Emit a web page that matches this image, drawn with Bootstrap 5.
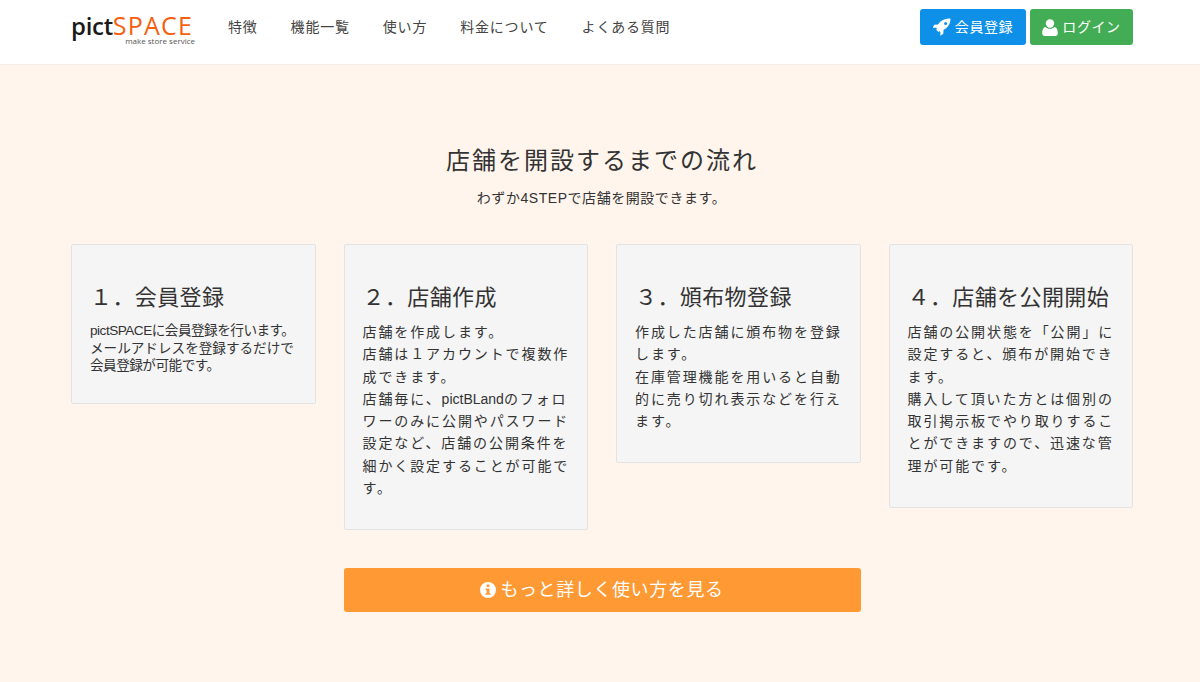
<!DOCTYPE html>
<html lang="ja">

<head>
    <meta charset="UTF-8">
    <meta name="viewport" content="width=device-width, initial-scale=1.0">
    <title>pictSPACE</title>
    <link href="https://cdn.jsdelivr.net/npm/bootstrap@5.3.3/dist/css/bootstrap.min.css" rel="stylesheet">
    <style>
        body {
            font-family: "Liberation Sans", "Noto Sans CJK JP", sans-serif;
            background: #fff5ec;
            color: #333;
            min-height: 682px;
        }

        .top-bar {
            background: #fff;
            height: 65px;
            border-bottom: 1px solid #f3eee9;
            padding: 0 67px 10px 71px;
        }

        .brand-logo {
            width: 125px;
            height: 40px;
            margin-top: 10px;
            text-decoration: none;
            line-height: 1;
        }

        .brand-main {
            font-family: "Open Sans", sans-serif;
            font-size: 24px;
            letter-spacing: -.3px;
            color: #1a1a1a;
            font-weight: 600;
            line-height: 26px;
        }

        .brand-main span {
            color: #f5600f;
            font-size: 25px;
            font-weight: 500;
            letter-spacing: 1.2px;
        }

        .brand-sub {
            font-family: "Open Sans", sans-serif;
            font-size: 8px;
            color: #555;
            text-align: right;
            line-height: 8px;
            margin-top: -2px;
            margin-right: 1px;
        }

        .top-links {
            margin-left: 32px;
            gap: 33px;
        }

        .top-links a {
            color: #444;
            font-size: 14px;
            letter-spacing: .8px;
            text-decoration: none;
        }

        .head-btn {
            height: 36px;
            font-size: 14px;
            letter-spacing: .6px;
            padding: 0 10px;
            color: #fff;
            border: 0;
            border-radius: 3px;
            white-space: nowrap;
        }

        .btn-join { background: #0e90e9; width: 106px; }
        .btn-login { background: #43ad55; width: 103px; }

        .flow-title {
            font-size: 24px;
            font-weight: 400;
            letter-spacing: 2px;
            text-align: center;
            margin: 79px 67px 0 71px;
            line-height: 34px;
        }

        .flow-lead {
            font-size: 14px;
            letter-spacing: .55px;
            text-align: center;
            margin: 10px 0 0;
            padding-left: 3px;
            line-height: 20px;
        }

        .flow-grid {
            display: grid;
            grid-template-columns: repeat(4, minmax(0, 1fr));
            column-gap: 28px;
            align-items: start;
            margin: 36px 67px 0 71px;
        }

        .flow-box {
            background: #f5f5f5;
            border: 1px solid #e3e3e3;
            border-radius: 2px;
            padding: 39px 17px 0 18px;
        }

        .flow-box h3 {
            font-size: 22px;
            font-weight: 400;
            line-height: 28px;
            margin: 0 0 9px;
            letter-spacing: .4px;
        }

        .flow-box p {
            font-size: 14px;
            line-height: 22.3px;
            letter-spacing: 1.9px;
            margin: 0;
        }

        .flow-box p .word-tight { letter-spacing: 0; }

        .box-one { height: 160px; }
        .box-one p { font-size: 13.6px; line-height: 17.5px; letter-spacing: 0; white-space: nowrap; }
        .box-one p .line-tight { letter-spacing: -.5px; }
        .box-one h3 { margin-bottom: 10px; }
        .box-two { height: 286px; }
        .box-three { height: 219px; }
        .box-four { height: 264px; }

        .more-btn {
            grid-column: 2 / span 2;
            height: 44px;
            margin-top: 38px;
            background: #ff9933;
            color: #fff;
            border: 0;
            border-radius: 3px;
            font-size: 18px;
            letter-spacing: .6px;
        }

        .more-btn:hover { background: #ff9933; color: #fff; }
    </style>
</head>

<body>

    <!-- NAVBAR -->
    <nav class="top-bar d-flex align-items-center justify-content-between">
        <div class="d-flex align-items-center">
            <a class="brand-logo d-block" href="#">
                <div class="brand-main">pict<span>SPACE</span></div>
                <div class="brand-sub">make store service</div>
            </a>
            <div class="top-links d-flex">
                <a href="#">特徴</a>
                <a href="#">機能一覧</a>
                <a href="#">使い方</a>
                <a href="#">料金について</a>
                <a href="#">よくある質問</a>
            </div>
        </div>
        <div class="d-flex gap-1">
            <button type="button" class="btn head-btn btn-join d-flex align-items-center justify-content-center gap-1">
                <svg width="18" height="18" viewBox="0 0 18 18" fill="#fff">
                    <path d="M17.4.6c.3 3.6-1 6.7-4 9.3l-2.9 2.2-.2 3.6-3 2 .1-3.5-1.1-1.1-.9.8-2.200-2.200.8-.9-1.100-1.100-3.500.1 2-3 3.600-.2 2.200-2.900C10.700 1.600 13.800.3 17.400.6z"/>
                    <circle cx="12.600" cy="5.400" r="1.500" fill="#0e90e9"/>
                </svg>
                会員登録
            </button>
            <button type="button" class="btn head-btn btn-login d-flex align-items-center justify-content-center gap-1">
                <svg width="16" height="17" viewBox="0 0 16 17" fill="#fff">
                    <circle cx="8" cy="4.500" r="4.200"/>
                    <path d="M3.500 8c1 1.200 2.800 1.800 4.500 1.800S11.500 9.200 12.500 8c2 .3 3.300 2.500 3.300 6 0 1.800-1 3-2.700 3H2.900C1.200 17 .2 15.800.2 14c0-3.500 1.300-5.700 3.300-6z"/>
                </svg>
                ログイン
            </button>
        </div>
    </nav>

    <h2 class="flow-title">店舗を開設するまでの流れ</h2>
    <p class="flow-lead">わずか4STEPで店舗を開設できます。</p>

    <div class="flow-grid">
        <div class="flow-box box-one">
            <h3>１．会員登録</h3>
            <p><span class="line-tight">pictSPACEに会員登録を行います。</span><br>メールアドレスを登録するだけで<br><span class="line-tight">会員登録が可能です。</span></p>
        </div>
        <div class="flow-box box-two">
            <h3>２．店舗作成</h3>
            <p>店舗を作成します。<br>店舗は１アカウントで複数作成できます。<br>店舗毎に、<span class="word-tight">pictBLand</span>のフォロワーのみに公開やパスワード設定など、店舗の公開条件を細かく設定することが可能です。</p>
        </div>
        <div class="flow-box box-three">
            <h3>３．頒布物登録</h3>
            <p>作成した店舗に頒布物を登録します。<br>在庫管理機能を用いると自動的に売り切れ表示などを行えます。</p>
        </div>
        <div class="flow-box box-four">
            <h3>４．店舗を公開開始</h3>
            <p>店舗の公開状態を「公開」に設定すると、頒布が開始できます。<br>購入して頂いた方とは個別の取引掲示板でやり取りすることができますので、迅速な管理が可能です。</p>
        </div>
        <button type="button" class="btn more-btn d-flex align-items-center justify-content-center gap-1">
            <svg width="16" height="16" viewBox="0 0 16 16">
                <path fill="#fff" fill-rule="evenodd" d="M8 0a8 8 0 1 1 0 16A8 8 0 0 1 8 0zM6.600 2.600v2.400h2.800V2.600zM5.600 6.400v1.500h1v3.400h-1v1.500h4.800v-1.500h-1V6.400z"/>
            </svg>
            もっと詳しく使い方を見る
        </button>
    </div>

    <script src="https://cdn.jsdelivr.net/npm/bootstrap@5.3.3/dist/js/bootstrap.bundle.min.js"></script>

</body>

</html>
